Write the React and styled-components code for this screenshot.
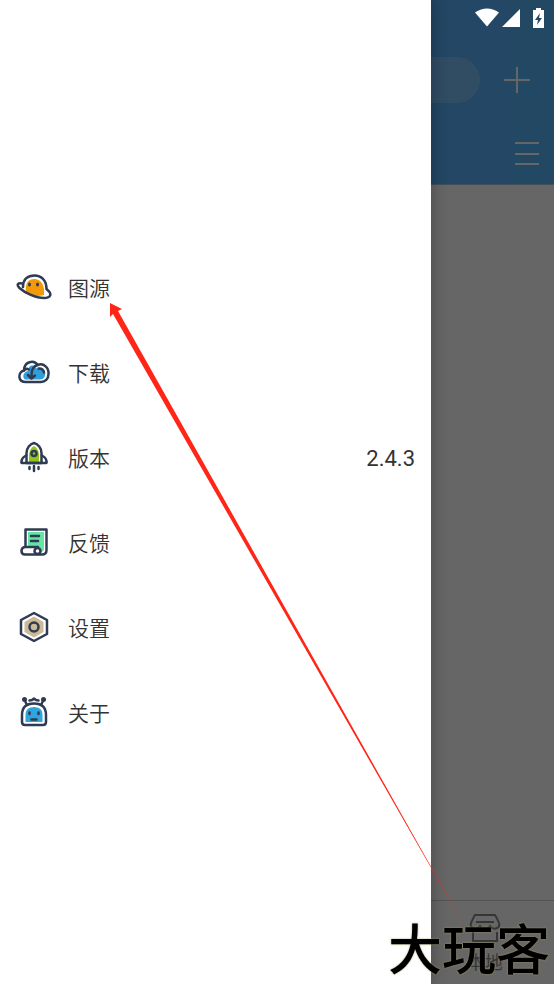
import React from 'react';
import styled, {createGlobalStyle} from 'styled-components';

const ink = '#2f3b52';
const fontStack = "Roboto, 'Noto Sans CJK SC', sans-serif";

const PlanetIcon = () => (
    <Icon viewBox="0 0 36 36" aria-hidden="true">
        <path d="M10 23C8.500 14 13 9.500 19 10S29 16 28 26Q18 29 10 23Z" fill="#f39a0b" />
        <path d="M7 18C7 10 12 6.500 18.500 6.500S30.500 11 30.500 20" stroke={ink} />
        <path d="M6.500 14.500C2 13.500 0 15.500 3.500 19C9 24 20 29 28 29C35 29 36.500 25 31 20.500" stroke={ink} />
        <ellipse cx="13.500" cy="15.500" rx="1.500" ry="2" fill={ink} />
        <ellipse cx="21.500" cy="15.500" rx="1.500" ry="2" fill={ink} />
    </Icon>
);

const CloudIcon = () => (
    <Icon viewBox="0 0 36 36" aria-hidden="true">
        <path d="M9 25.500C5 22 9 17 12.500 17C12 10 19 10 21 15C27 12 31 18 28.500 23Q27 25.500 24 25.500Z" fill="#2f9edb" />
        <path d="M10 28C1.500 28 1.500 18 8 16.500C8 7.500 18 5.500 21.500 11C28 8.500 33 14 32.500 20C32.500 25 29 28 25 28Z" stroke={ink} />
        <path d="M8 16.500C9 15 11 14.500 13 15.500M21.500 11C17 12 15 16 15.500 24M12 21L15.500 24.500L19 21.500M22.500 14.500Q27 14 28 18.500" stroke={ink} />
    </Icon>
);

const RocketIcon = () => (
    <Icon viewBox="0 0 36 36" aria-hidden="true">
        <path d="M13 23V15Q14 9 18 7Q22 9 23 15V23Z" fill="#91c51e" />
        <path d="M10.500 24V14C10.500 9 14 5 18 4C22 5 25.500 9 25.500 14V24Z" stroke={ink} />
        <path d="M10 16.500Q5 19 5.500 24H30.500Q31 19 26 16.500" stroke={ink} />
        <circle cx="18" cy="14.500" r="2.500" stroke={ink} />
        <path d="M13.500 28V30M18 27V32M22.500 28V30" stroke={ink} />
    </Icon>
);

const ScrollIcon = () => (
    <Icon viewBox="0 0 36 36" aria-hidden="true">
        <path d="M12 8H28V25Q28 28 24 28V23H12Z" fill="#65e5a4" />
        <path d="M9.500 23V5.500H30.500V26Q30.500 30.500 26 30.500H9Q5.500 30.500 5.500 27T9 23H22" stroke={ink} />
        <circle cx="21.500" cy="27" r="3" fill="white" stroke={ink} />
        <path d="M15 12H23M15 17H22" stroke={ink} />
    </Icon>
);

const HexIcon = () => (
    <Icon viewBox="0 0 36 36" aria-hidden="true">
        <path d="M18 4L31 11V25L18 32L5 25V11Z" stroke={ink} />
        <path d="M18 7.500L27.500 13V23L18 28.500L8.500 23V13Z" fill="#ccb995" />
        <circle cx="18" cy="18" r="4.500" stroke={ink} />
    </Icon>
);

const RobotIcon = () => (
    <Icon viewBox="0 0 36 36" aria-hidden="true">
        <path d="M9.500 28V20Q10 13 18 13T26.500 20V28Z" fill="#2fa4df" />
        <path d="M6 21C6 13 11 9.500 18 9.500S30 13 30 21V28Q30 31 27 31H9Q6 31 6 28Z" stroke={ink} />
        <path d="M11 11L8.500 6M25 11L27.500 6M13.500 6.500L16 6L18 4.500L20 6L22.500 6.500" stroke={ink} />
        <circle cx="8.500" cy="5.500" r="2.500" fill={ink} />
        <circle cx="27.500" cy="5.500" r="2.500" fill={ink} />
        <path d="M13.500 18.500V20M22.500 18.500V20M15.500 25.500H20.500" stroke={ink} />
    </Icon>
);

const menuItems = [
    {label: '图源', icon: PlanetIcon},
    {label: '下载', icon: CloudIcon},
    {label: '版本', icon: RocketIcon, value: '2.4.3'},
    {label: '反馈', icon: ScrollIcon},
    {label: '设置', icon: HexIcon},
    {label: '关于', icon: RobotIcon},
];

const App = () => {
    return (
        <Screen>
            <GlobalStyle />
            <Header>
                <SearchRow>
                    <SearchInput type="search" aria-label="搜索" />
                    <IconButton aria-label="添加">
                        <svg width="26" height="26" viewBox="0 0 26 26">
                            <path d="M13 0V26M0 13H26" />
                        </svg>
                    </IconButton>
                </SearchRow>
                <ToolRow>
                    <IconButton aria-label="菜单">
                        <svg width="24" height="24" viewBox="0 0 24 24">
                            <path d="M0 1H24M0 12H24M0 22H24" />
                        </svg>
                    </IconButton>
                </ToolRow>
            </Header>
            <Content />
            <BottomNav>
                <NavLink href="#local">
                    <svg width="32" height="30" viewBox="0 0 32 30">
                        <path d="M6 2H26Q28 5 30 10Q31 14 28 15Q24 17 21 13Q19 16 16 16T11 13Q8 17 4 15Q1 14 2 10Q4 5 6 2ZM7 9H25M4 19V28H28V19" />
                    </svg>
                    本地
                </NavLink>
            </BottomNav>
            <Scrim />
            <Drawer>
                {menuItems.map(({label, icon: ItemIcon, value}) => (
                    <MenuButton key={label}>
                        <ItemIcon />
                        <Label>{label}</Label>
                        {value && <Value>{value}</Value>}
                    </MenuButton>
                ))}
            </Drawer>
            <StatusIcons viewBox="0 0 72 20" aria-hidden="true">
                <path d="M0 4.500Q12 -3.500 24 4.500L12 18.500Z" />
                <path d="M45 1V19H27Z" />
                <path d="M58 2H61V0H66V2H69V20H58Z" />
                <path d="M65 5L60 12H63L62 17L67 10H64Z" fill="#234865" />
            </StatusIcons>
            <Arrow viewBox="0 0 356 625" aria-hidden="true">
                <path d="M0 0L12 6L8 8L355 624L3 11L0 14Z" />
            </Arrow>
            <Watermark>大玩客</Watermark>
        </Screen>
    );
};

export default App;

const GlobalStyle = createGlobalStyle`
    body {
        margin: 0;
        font-family: ${fontStack};
    }
    * {
        box-sizing: border-box;
    }
    button {
        border: 0;
        padding: 0;
        background: none;
        font: inherit;
        cursor: pointer;
    }
`;

const Screen = styled.div`
    position: relative;
    display: flex;
    flex-direction: column;
    min-height: 100vh;
    overflow: hidden;
    background: white;
`;

const Header = styled.header`
    padding-top: 36px;
    background: linear-gradient(90deg, #50a5ff, #5ab4fa);
    border-bottom: 1px solid #a8c4da;
`;

const SearchRow = styled.div`
    display: flex;
    align-items: center;
    gap: 24px;
    height: 88px;
    padding: 0 24px 0 16px;
`;

const SearchInput = styled.input`
    flex: 1;
    min-width: 0;
    height: 46px;
    padding: 0 24px;
    border: 0;
    border-radius: 23px;
    background: rgba(255, 255, 255, 0.2);
    font: inherit;
    appearance: none;
`;

const IconButton = styled.button`
    display: flex;
    svg {
        stroke: white;
        stroke-width: 2;
    }
`;

const ToolRow = styled.div`
    display: flex;
    align-items: center;
    justify-content: flex-end;
    height: 60px;
    padding: 0 15px;
`;

const Content = styled.main`
    flex: 1;
`;

const BottomNav = styled.nav`
    display: grid;
    grid-template-columns: repeat(4, 1fr);
    height: 84px;
    border-top: 1px solid #d0d0d0;
`;

const NavLink = styled.a`
    grid-column: 4;
    display: flex;
    flex-direction: column;
    align-items: center;
    gap: 7px;
    padding-top: 12px;
    color: #888888;
    font-size: 18px;
    line-height: 26px;
    text-decoration: none;
    svg {
        fill: none;
        stroke: currentColor;
        stroke-width: 2;
    }
`;

const Scrim = styled.div`
    position: absolute;
    inset: 0;
    background: rgba(0, 0, 0, 0.6);
`;

const Drawer = styled.aside`
    position: absolute;
    inset: 0 123px 0 0;
    padding-top: 244px;
    background: white;
    box-shadow: 0 0 16px rgba(0, 0, 0, 0.3);
`;

const MenuButton = styled.button`
    display: flex;
    align-items: center;
    gap: 16px;
    width: 100%;
    height: 85px;
    && {
        padding: 0 16px;
    }
    color: #333333;
    text-align: left;
`;

const Icon = styled.svg`
    width: 36px;
    height: 36px;
    fill: none;
    stroke-width: 2.5;
    stroke-linecap: round;
    stroke-linejoin: round;
`;

const Label = styled.span`
    font-size: 21px;
    font-weight: 350;
`;

const Value = styled.span`
    margin-left: auto;
    padding-top: 4px;
    font-size: 22px;
`;

const StatusIcons = styled.svg`
    position: absolute;
    top: 8px;
    right: 7px;
    width: 72px;
    height: 20px;
    fill: white;
`;

const Arrow = styled.svg`
    position: absolute;
    top: 303px;
    left: 110px;
    width: 356px;
    height: 625px;
    fill: #ff2617;
    pointer-events: none;
`;

const Watermark = styled.div`
    position: absolute;
    right: 4px;
    bottom: 4px;
    color: black;
    font-size: 54px;
    font-weight: 500;
    line-height: 56px;
    text-shadow: 0 0 2px #a59a62;
    pointer-events: none;
`;
